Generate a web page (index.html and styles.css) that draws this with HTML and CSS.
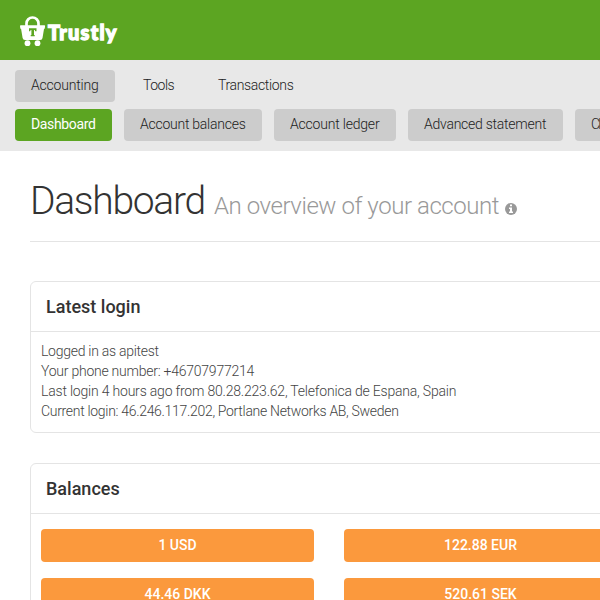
FILE: index.html
```html
<!DOCTYPE html>
<html lang="en">
<head>
<meta charset="utf-8">
<title>Trustly</title>
<link rel="stylesheet" href="styles.css">
</head>
<body>
<header class="topbar">
  <svg class="logo" width="26" height="32" viewBox="0 0 26 32" aria-hidden="true">
    <path d="M6.500 11V7.500a6 6 0 0 1 12 0V11" fill="none" stroke="#fff" stroke-width="2.700"/>
    <path d="M.8 9.200H24.400q.8 0 .7.800l-.3 2.300q-.1.800-.8.800L22.500 22q-.3 2-2.300 2H5q-2 0-2.400-2L1.100 13.100q-.7 0-.8-.8L0 10q-.1-.8.800-.8Z" fill="#fff"/>
    <path d="M9 12.200h7.500v3h-1.300l-.4-1.100h-.8v4.900h.7v1.200h-4v-1.200h.7v-4.900h-.8l-.4 1.100H9Z" fill="#5ca522"/>
    <circle cx="7.500" cy="27.200" r="2.900" fill="#fff"/><circle cx="17.500" cy="27.200" r="2.900" fill="#fff"/>
  </svg>
  <span class="brand">Trustly</span>
</header>
<nav class="menu">
  <div class="row primary">
    <a class="tab shaded w-accounting">Accounting</a>
    <a class="tab w-tools">Tools</a>
    <a class="tab w-transactions">Transactions</a>
  </div>
  <div class="row secondary">
    <a class="tab active w-dashboard">Dashboard</a>
    <a class="tab shaded w-balances">Account balances</a>
    <a class="tab shaded w-ledger">Account ledger</a>
    <a class="tab shaded w-statement">Advanced statement</a>
    <a class="tab shaded last">Clearing</a>
  </div>
</nav>
<main class="content">
  <div class="page-header">
    <h1>Dashboard</h1>
    <span class="subtitle">An overview of your account</span>
    <svg class="info" width="12" height="12" viewBox="0 0 12 12" aria-hidden="true">
      <circle cx="6" cy="6" r="6" fill="#999"/>
      <path d="M5 1.500h2v1.700H5ZM4 4.500h3v4h1v1.500H4V8.500h1V6H4Z" fill="#fff"/>
    </svg>
  </div>
  <section class="panel login">
    <h2 class="t-login">Latest login</h2>
    <div class="details">
      <div class="l1">Logged in as apitest</div>
      <div class="l2">Your phone number: +46707977214</div>
      <div class="l3">Last login 4 hours ago from 80.28.223.62, Telefonica de Espana, Spain</div>
      <div class="l4">Current login: 46.246.117.202, Portlane Networks AB, Sweden</div>
    </div>
  </section>
  <section class="panel balances">
    <h2 class="t-balances">Balances</h2>
    <div class="grid">
      <a class="amount">1 USD</a><a class="amount">122.88 EUR</a>
      <a class="amount">44.46 DKK</a><a class="amount">520.61 SEK</a>
    </div>
  </section>
</main>
</body>
</html>
```
FILE: styles.css
```css
* { box-sizing: border-box; }
html, body { margin: 0; height: 600px; overflow: hidden; }
body {
  width: 600px;
  background: #fff;
  color: #333;
  font: 300 14px/20px Roboto, "Open Sans", sans-serif;
  white-space: nowrap;
}
.topbar { height: 60px; background: #5ca522; display: flex; padding: 16px 0 0 20px; gap: 2px; }
.logo { flex: none; }
.brand { color: #fff; font: 900 20px/33px Lato, sans-serif; letter-spacing: 1.2px; -webkit-text-stroke: 1.3px #fff; }
.menu { height: 91px; background: #e8e8e8; padding: 10px 0 0 15px; overflow: hidden; }
.row { display: flex; height: 32px; }
.secondary { margin-top: 7px; gap: 12px; }
.tab { flex: none; height: 32px; padding: 5px 0 7px 16px; border-radius: 4px; color: #222; letter-spacing: -0.25px; }
.shaded { background: #ccc; }
.active { background: #5ca522; color: #fff; font-weight: 400; }
.w-accounting { width: 100px; letter-spacing: -0.2px; }
.w-tools { width: 75px; margin-left: 12px; letter-spacing: -0.5px; }
.w-transactions { width: 108px; letter-spacing: -0.35px; }
.w-dashboard { width: 97px; letter-spacing: -0.35px; }
.w-balances { width: 138px; }
.w-ledger { width: 122px; letter-spacing: -0.2px; }
.w-statement { width: 155px; }
.last { width: 100px; letter-spacing: -1.8px; }
.content { width: 640px; padding: 0 0 0 30px; }
.page-header { height: 91px; border-bottom: 1px solid #e4e4e4; display: flex; align-items: baseline; padding-top: 27px; }
h1 { margin: 0; width: 184px; font-size: 39px; font-weight: 300; line-height: 46px; letter-spacing: -1.3px; }
.subtitle { width: 291px; color: #999; font-size: 24px; line-height: 30px; letter-spacing: -0.44px; }
.info { flex: none; align-self: flex-start; margin-top: 25px; }
.panel { width: 610px; border: 1px solid #e4e4e4; border-radius: 6px; }
.login { margin-top: 39px; height: 152px; }
.balances { margin-top: 30px; height: 200px; }
h2 { margin: 0; height: 50px; padding-left: 15px; border-bottom: 1px solid #e4e4e4; font-size: 18px; line-height: 50px; font-weight: 500; }
.details { padding: 9px 10px; color: #444; }
.l1 { letter-spacing: -0.27px; }
.l2 { letter-spacing: -0.24px; }
.l3 { letter-spacing: -0.2px; }
.l4 { letter-spacing: -0.31px; }
.grid { display: grid; grid-template-columns: 273px 273px; column-gap: 30px; row-gap: 16px; padding: 15px 10px; }
.amount { height: 33px; border-radius: 4px; background: #fb993d; color: #fff; text-align: center; font-weight: 500; line-height: 33px; }
```
